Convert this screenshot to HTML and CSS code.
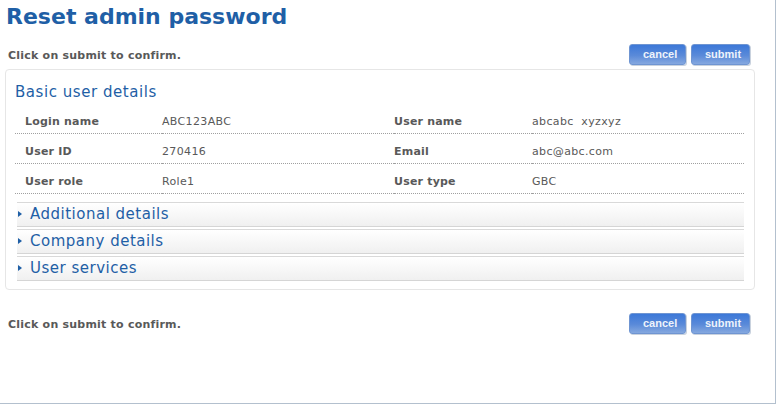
FILE: index.html
```html
<!DOCTYPE html>
<html lang="en">
<head>
<meta charset="utf-8">
<title>Reset admin password</title>
<link rel="stylesheet" href="styles.css">
</head>
<body>
<div class="frame">
  <h1 class="title">Reset admin password</h1>
  <div class="toolbar">
    <span class="hint">Click on submit to confirm.</span>
    <div class="actions">
      <button class="btn">cancel</button>
      <button class="btn">submit</button>
    </div>
  </div>
  <div class="panel">
    <h2 class="panel-title">Basic user details</h2>
    <div class="details">
      <div class="label">Login name</div><div class="value">ABC123ABC</div>
      <div class="label">User name</div><div class="value">abcabc&nbsp; xyzxyz</div>
      <div class="label">User ID</div><div class="value">270416</div>
      <div class="label">Email</div><div class="value">abc@abc.com</div>
      <div class="label">User role</div><div class="value">Role1</div>
      <div class="label">User type</div><div class="value">GBC</div>
    </div>
    <div class="section"><span class="arrow"></span>Additional details</div>
    <div class="section"><span class="arrow"></span>Company details</div>
    <div class="section"><span class="arrow"></span>User services</div>
  </div>
  <div class="toolbar bottom">
    <span class="hint">Click on submit to confirm.</span>
    <div class="actions">
      <button class="btn">cancel</button>
      <button class="btn">submit</button>
    </div>
  </div>
</div>
</body>
</html>
```

FILE: styles.css
```css
html, body {
  margin: 0;
  padding: 0;
  background: #ffffff;
}
body {
  font-family: "DejaVu Sans", Verdana, sans-serif;
}
.frame {
  width: 775px;
  height: 403px;
  border-right: 1px solid #b3c0ce;
  border-bottom: 1px solid #b3c0ce;
  overflow: hidden;
}
.title {
  margin: 0;
  padding: 4px 0 0 6px;
  height: 40px;
  box-sizing: border-box;
  font-size: 22px;
  line-height: 26px;
  font-weight: bold;
  color: #1f5fa6;
}
.toolbar {
  display: flex;
  align-items: center;
  justify-content: space-between;
  height: 21px;
  padding: 0 25px 0 8px;
  margin-top: 4px;
}
.toolbar.bottom {
  margin-top: 23px;
}
.hint {
  font-size: 11px;
  font-weight: bold;
  letter-spacing: 0.22px;
  color: #595959;
  padding-top: 1px;
}
.actions {
  display: flex;
  gap: 5px;
}
.btn {
  height: 21px;
  border: 1px solid #6f95d2;
  border-radius: 3px;
  padding: 0 8px 0 13px;
  background: linear-gradient(#3c78d8, #5a8ad9 55%, #85a8df);
  box-shadow: 1px 1px 0 #c9d2de;
  color: #eef3fb;
  font-family: "Liberation Sans", Arial, sans-serif;
  font-size: 11px;
  font-weight: bold;
  line-height: 19px;
}
.btn:first-child { width: 57px; }
.btn:last-child { width: 59px; }
.panel {
  margin: 4px 0 0 5px;
  width: 750px;
  box-sizing: border-box;
  border: 1px solid #e6e6e6;
  border-radius: 4px;
  padding: 0 10px 8px 9px;
}
.panel-title {
  margin: 0;
  padding-top: 12px;
  height: 34px;
  box-sizing: border-box;
  font-size: 15px;
  line-height: 20px;
  letter-spacing: 0.55px;
  font-weight: normal;
  color: #1f5fa6;
}
.details {
  display: grid;
  grid-template-columns: 147px 232px 138px 1fr;
  margin-bottom: 8px;
}
.label, .value {
  font-size: 11px;
  line-height: 15px;
  padding: 10px 0 4px;
  border-bottom: 1px dotted #a0a0a0;
  color: #595959;
}
.label {
  font-weight: bold;
  letter-spacing: 0.2px;
}
.value {
  letter-spacing: 0.35px;
}
.details .label:nth-child(4n+1) {
  padding-left: 10px;
}
.section {
  margin: 0 0 2px 2px;
  height: 23px;
  border-top: 1px solid #d9d9d9;
  border-bottom: 1px solid #d5d5d5;
  background: linear-gradient(#ffffff, #f0f0f0);
  display: flex;
  align-items: center;
  padding-bottom: 2px;
  box-sizing: content-box;
  height: 21px;
  font-size: 15px;
  letter-spacing: 0.5px;
  color: #1f5fa6;
}
.section:last-child {
  margin-bottom: 0;
}
.arrow {
  width: 0;
  height: 0;
  margin: 0 8px 0 1px;
  border-top: 3px solid transparent;
  border-bottom: 3px solid transparent;
  border-left: 4px solid #1f5fa6;
}
```
